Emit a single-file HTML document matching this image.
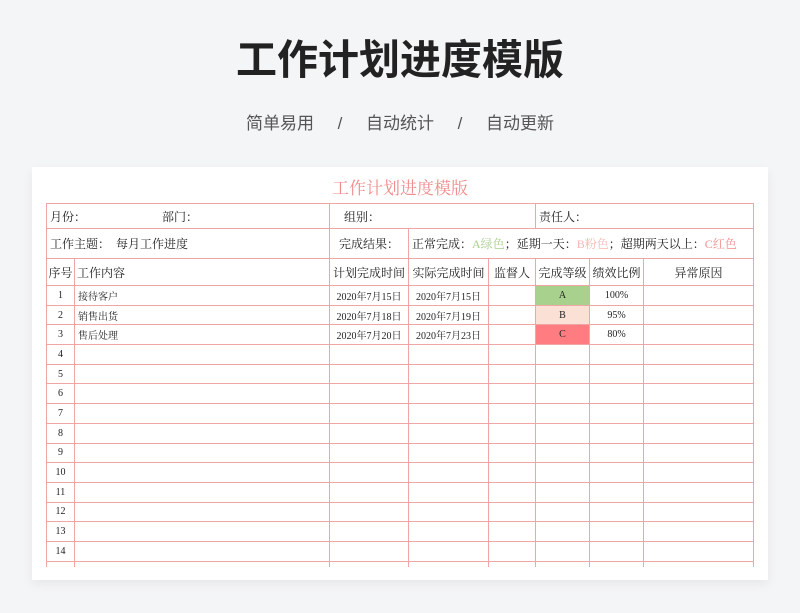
<!DOCTYPE html>
<html><head><meta charset="utf-8"><style>
body{margin:0;width:800px;height:613px;background:#f4f5f7;font-family:"Liberation Sans","Noto Sans CJK SC",sans-serif;position:relative;overflow:hidden}
.t{position:absolute;top:33px;left:0;width:800px;text-align:center;font-size:41px;font-weight:bold;color:#222;letter-spacing:0px;line-height:54px}
.s{position:absolute;top:112px;left:0;width:800px;text-align:center;font-size:17px;color:#555;line-height:24px;word-spacing:0}
.card{position:absolute;left:32px;top:167px;width:736px;height:413px;background:#fff;box-shadow:0 4px 10px rgba(0,0,0,.06)}
.ct{position:absolute;top:8px;left:0;width:736px;text-align:center;color:#f08c8c;font-size:17px;font-family:"Noto Serif CJK SC",serif;line-height:24px}
.wrap{position:absolute;left:14px;top:36px;width:708px;height:364px;overflow:hidden}
table{border-collapse:collapse;table-layout:fixed;font-family:"Liberation Serif","Noto Serif CJK SC",serif;color:#222}
td{border:1px solid #f2a5a5;padding:0;font-size:12px;white-space:nowrap;overflow:hidden}
.d td{height:18.7px;font-size:10px;text-align:center}
.d td:nth-child(2){text-align:left;padding-left:3px}
.g{color:#a8d08d}.p{color:#f7b8b0}.r{color:#f08c8c}
</style></head><body>
<div class="t">工作计划进度模版</div>
<div class="s">简单易用&nbsp;&nbsp;&nbsp;&nbsp;&nbsp;/&nbsp;&nbsp;&nbsp;&nbsp;&nbsp;自动统计&nbsp;&nbsp;&nbsp;&nbsp;&nbsp;/&nbsp;&nbsp;&nbsp;&nbsp;&nbsp;自动更新</div>
<div class="card">
<div class="ct">工作计划进度模版</div>
<div class="wrap">
<table>
<colgroup><col style="width:28px"><col style="width:255px"><col style="width:79px"><col style="width:80px"><col style="width:47px"><col style="width:54px"><col style="width:54px"><col style="width:110px"></colgroup>
<tr style="height:25px"><td colspan="2" style="padding-left:3px">月份：<span style="margin-left:76px">部门：</span></td><td colspan="3" style="padding-left:14px">组别：</td><td colspan="3" style="padding-left:3px">责任人：</td></tr>
<tr style="height:30px"><td colspan="2" style="padding-left:3px">工作主题：&nbsp;&nbsp;每月工作进度</td><td style="padding-left:9px">完成结果：</td><td colspan="5" style="padding-left:3px">正常完成：<span class="g">A绿色</span>；延期一天：<span class="p">B粉色</span>；超期两天以上：<span class="r">C红色</span></td></tr>
<tr style="height:27px"><td style="text-align:center">序号</td><td style="padding-left:2px">工作内容</td><td style="text-align:center">计划完成时间</td><td style="text-align:center">实际完成时间</td><td style="text-align:center">监督人</td><td style="text-align:center">完成等级</td><td style="text-align:center">绩效比例</td><td style="text-align:center">异常原因</td></tr>
<tr class="d"><td>1</td><td>接待客户</td><td>2020年7月15日</td><td>2020年7月15日</td><td></td><td style="background:#a9d18e">A</td><td>100%</td><td></td></tr>
<tr class="d"><td>2</td><td>销售出货</td><td>2020年7月18日</td><td>2020年7月19日</td><td></td><td style="background:#fbe0d6">B</td><td>95%</td><td></td></tr>
<tr class="d"><td>3</td><td>售后处理</td><td>2020年7月20日</td><td>2020年7月23日</td><td></td><td style="background:#ff7c80">C</td><td>80%</td><td></td></tr>
<tr class="d"><td>4</td><td></td><td></td><td></td><td></td><td></td><td></td><td></td></tr>
<tr class="d"><td>5</td><td></td><td></td><td></td><td></td><td></td><td></td><td></td></tr>
<tr class="d"><td>6</td><td></td><td></td><td></td><td></td><td></td><td></td><td></td></tr>
<tr class="d"><td>7</td><td></td><td></td><td></td><td></td><td></td><td></td><td></td></tr>
<tr class="d"><td>8</td><td></td><td></td><td></td><td></td><td></td><td></td><td></td></tr>
<tr class="d"><td>9</td><td></td><td></td><td></td><td></td><td></td><td></td><td></td></tr>
<tr class="d"><td>10</td><td></td><td></td><td></td><td></td><td></td><td></td><td></td></tr>
<tr class="d"><td>11</td><td></td><td></td><td></td><td></td><td></td><td></td><td></td></tr>
<tr class="d"><td>12</td><td></td><td></td><td></td><td></td><td></td><td></td><td></td></tr>
<tr class="d"><td>13</td><td></td><td></td><td></td><td></td><td></td><td></td><td></td></tr>
<tr class="d"><td>14</td><td></td><td></td><td></td><td></td><td></td><td></td><td></td></tr>
<tr class="d"><td></td><td></td><td></td><td></td><td></td><td></td><td></td><td></td></tr>
</table>
</div>
</div>
</body></html>
